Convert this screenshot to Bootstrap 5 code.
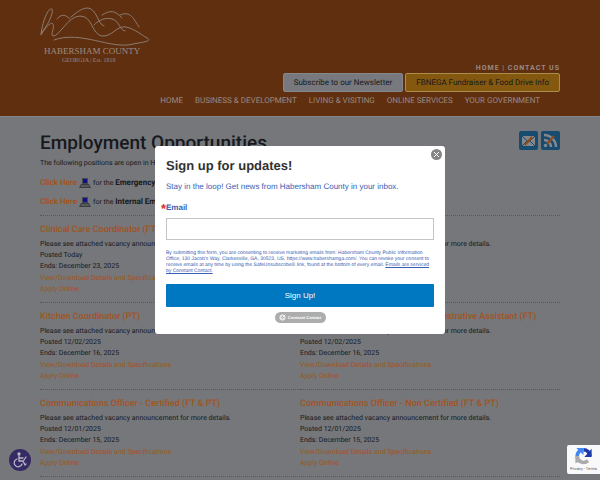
<!DOCTYPE html>
<html lang="en">
<head>
<meta charset="utf-8">
<meta name="viewport" content="width=device-width, initial-scale=1">
<title>Employment Opportunities - Habersham County</title>
<link href="https://cdn.jsdelivr.net/npm/bootstrap@5.3.0/dist/css/bootstrap.min.css" rel="stylesheet">
<style>
body{font-family:Roboto,"Liberation Sans",sans-serif;font-size:7px;line-height:11px;color:#17191d;background:#75777b;text-rendering:geometricPrecision}
a{color:#a35420;text-decoration:none}
.site-gutter{padding-left:40px;padding-right:40px}
.site-header{background:#5f2f10;border-bottom:1px solid #85868a;padding-top:7px;padding-bottom:10px}
.logo{width:112px;height:58px}
.header-links{padding-top:57px}
.top-links{font-size:7px;line-height:9px;font-weight:700;letter-spacing:1px;color:#9a8a80}
.top-links a,.main-nav a{color:#9a8a80}
.cta-row{gap:2px}
.cta{font-size:8px;line-height:11px;padding:3px 10px;border-radius:2px;color:#17191d;background:#77797e;border:1px solid #858789}
.cta-gold{background:#84580f;border:1px solid #a98d4a}
.main-nav{font-size:8px;line-height:10px;gap:12px;padding-right:20px;margin-top:4px}
h1{font-size:19px;line-height:24px;font-weight:500;margin:0}
.page-head{padding-top:14px}
.share-row{gap:3px}
.lead-in{margin:3px 0 8px}
.apply-line{gap:2px;margin:0 0 7px}
.apply-line a,.apply-line b{font-weight:700;font-size:8px}
.pc{width:12px;height:11px}
.share{width:19px;height:19px}
.jobs{display:grid;grid-template-columns:1fr 1fr;border-bottom:1px dotted #55575b}
.job{border-top:1px dotted #55575b;padding:9px 0 7px}
.job h2{font-size:9px;line-height:11px;font-weight:500;margin:0 0 3px;white-space:nowrap}
.job-links{margin-top:1px}
.signup{width:290px;background:#fff;border-radius:3px;padding:11px;font-family:"Liberation Sans",sans-serif;font-size:8px;color:#3860b2}
.signup h2{font-size:13px;line-height:18px;font-weight:700;color:#313131;margin:0 0 7px}
.signup .intro{line-height:10px;margin:0 0 11px}
.signup label{font-weight:700;line-height:10px;margin-bottom:5px}
.signup label::before{content:"*";position:absolute;left:-5px;color:#e0302a;font-size:13px;line-height:11px}
.signup input{height:22px;border:1px solid #c4c4c4;border-radius:0;padding:2px 6px;font-size:8px}
.terms{font-size:5px;line-height:6px;margin:10px 0}
.terms a{color:#3860b2;text-decoration:underline}
.send{background:#0078c1;color:#fff;font-size:8px;line-height:11px;padding:6px;border:0;border-radius:1px}
.send:hover{background:#0069a9;color:#fff}
.cc{background:#adadad;color:#fff;font-size:4px;line-height:11px;border-radius:6px;width:51px;margin-top:5px;gap:2px}
.cc svg{width:7px;height:7px}
.shut{top:3px;right:3px;width:11px;height:11px;border:0;padding:0;background:none;line-height:0}
.shut svg{display:block;width:11px;height:11px}
.access{left:9px;bottom:9px;width:22px;height:22px;border:0;border-radius:50%;background:#352a63;padding:3px}
.captcha{right:0;bottom:6px;width:33px;height:29px;background:#f9f9f9;font-size:4px;line-height:5px;color:#555;border-radius:2px 0 0 2px;padding-top:2px}
.captcha svg{width:19px;height:18px;margin:0 auto 1px}
.captcha,.access{z-index:10}
</style>
<script src="https://cdn.jsdelivr.net/npm/bootstrap@5.3.0/dist/js/bootstrap.bundle.min.js"></script>
</head>
<body>
<header class="site-header site-gutter d-flex justify-content-between">
  <a href="#" aria-label="Habersham County, Georgia" class="flex-shrink-0 position-absolute">
    <svg class="logo d-block" viewBox="0 0 112 58" fill="none" stroke="#8d7b70" stroke-width="1" stroke-linecap="round">
      <path d="M1 26C7 20 14 6 12 2C8 0 2 16 1 28C5 21 11 14 13 17C15 20 10 28 13 29C19 30 28 9 40 9C53 9 51 27 62 29C72 30 77 18 86 20C95 22 103 29 107 31"/>
      <path d="M17 12C21 7 25 7 30 12M31 10C37 5 42 1 48 1C57 2 58 18 64 19M54 18C58 13 67 10 72 12C80 14 79 23 85 24M62 8C70 3 75 3 82 11M80 8C91 3 94 13 99 20M14 33C41 23 71 43 93 37C104 35 113 34 107 31"/>
      <text x="4" y="47" font-family="Liberation Serif,serif" font-size="9" fill="#998a80" stroke="none">HABERSHAM COUNTY</text>
      <text x="22" y="55" font-family="Liberation Serif,serif" font-size="6" fill="#998a80" stroke="none">GEORGIA | Est. 1818</text>
    </svg>
  </a>
  <div class="header-links d-flex flex-column align-items-end ms-auto">
    <div class="top-links"><a href="#">HOME</a> | <a href="#">CONTACT US</a></div>
    <div class="cta-row d-flex text-nowrap">
      <a class="cta" href="#">Subscribe to our Newsletter</a>
      <a class="cta cta-gold" href="#">FBNEGA Fundraiser &amp; Food Drive Info</a>
    </div>
    <nav class="main-nav d-flex text-nowrap">
      <a href="#">HOME</a><a href="#">BUSINESS &amp; DEVELOPMENT</a><a href="#">LIVING &amp; VISITING</a><a href="#">ONLINE SERVICES</a><a href="#">YOUR GOVERNMENT</a>
    </nav>
  </div>
</header>
<svg class="d-none"><symbol id="pc" viewBox="0 0 12 11"><path d="M3 1h6v6H3z" fill="#47494d"/><path d="M4 2h4v4H4z" fill="#10108a"/><path d="M2 7h8l2 4H0z" fill="#3b3d41"/><path d="M2 9h8" stroke="#777"/></symbol></svg>
<main class="site-gutter">
  <div class="page-head d-flex justify-content-between">
    <h1>Employment Opportunities</h1>
    <div class="share-row d-flex">
      <a href="#" aria-label="Email this page"><svg class="share" viewBox="0 0 19 19"><rect width="19" height="19" rx="2" fill="#184b70"/><path d="M3 5h13v10H3z" fill="#83888d"/><path d="M3 5l6.500 6L16 5M3 15l5-5M16 15l-5-5" fill="none" stroke="#24445e"/><path d="M6 14l7-8" stroke="#8b4b1b" stroke-width="2"/></svg></a>
      <a href="#" aria-label="Subscribe to feed"><svg class="share" viewBox="0 0 19 19"><rect width="19" height="19" rx="2" fill="#184b70"/><path d="M3 9a7 7 0 0 1 7 7M3 4a12 12 0 0 1 12 12" fill="none" stroke="#83888d" stroke-width="2.500"/><circle cx="4.500" cy="14.500" r="1.700" fill="#83888d"/><path d="M6 13l7-8" stroke="#8b4b1b" stroke-width="2"/></svg></a>
    </div>
  </div>
  <p class="lead-in">The following positions are open in Habersham County.</p>
  <p class="apply-line d-flex"><a href="#">Click Here</a><svg class="pc"><use href="#pc"/></svg><span>for the <b>Emergency Services</b></span></p>
  <p class="apply-line d-flex"><a href="#">Click Here</a><svg class="pc"><use href="#pc"/></svg><span>for the <b>Internal Employment</b></span></p>
  <div class="jobs">
    <section class="job"><h2><a href="#">Clinical Care Coordinator (FT)</a></h2><div>Please see attached vacancy announcement for more details.<br>Posted Today<br>Ends: December 23, 2025</div><div class="job-links"><a href="#">View/Download Details and Specifications</a><br><a href="#">Apply Online</a></div></section>
    <section class="job"><h2><a href="#">Maintenance Worker (FT)</a></h2><div>Please see attached vacancy announcement for more details.<br>Posted Today<br>Ends: December 23, 2025</div><div class="job-links"><a href="#">View/Download Details and Specifications</a><br><a href="#">Apply Online</a></div></section>
    <section class="job"><h2><a href="#">Kitchen Coordinator (PT)</a></h2><div>Please see attached vacancy announcement for more details.<br>Posted 12/02/2025<br>Ends: December 16, 2025</div><div class="job-links"><a href="#">View/Download Details and Specifications</a><br><a href="#">Apply Online</a></div></section>
    <section class="job"><h2><a href="#">Operations and Development Administrative Assistant (FT)</a></h2><div>Please see attached vacancy announcement for more details.<br>Posted 12/02/2025<br>Ends: December 16, 2025</div><div class="job-links"><a href="#">View/Download Details and Specifications</a><br><a href="#">Apply Online</a></div></section>
    <section class="job"><h2><a href="#">Communications Officer - Certified (FT &amp; PT)</a></h2><div>Please see attached vacancy announcement for more details.<br>Posted 12/01/2025<br>Ends: December 15, 2025</div><div class="job-links"><a href="#">View/Download Details and Specifications</a><br><a href="#">Apply Online</a></div></section>
    <section class="job"><h2><a href="#">Communications Officer - Non Certified (FT &amp; PT)</a></h2><div>Please see attached vacancy announcement for more details.<br>Posted 12/01/2025<br>Ends: December 15, 2025</div><div class="job-links"><a href="#">View/Download Details and Specifications</a><br><a href="#">Apply Online</a></div></section>
  </div>
</main>
<button type="button" class="access position-fixed d-flex" aria-label="Accessibility options"><svg viewBox="0 0 16 16" fill="none" stroke="#b9b9c4" stroke-width="1.300" stroke-linecap="round"><circle cx="7" cy="2" r="1" fill="#b9b9c4"/><path d="M7 4v5h4l2 4 1-1M7 6h4M5 7a4 4 0 1 0 5 5M12 8l2-3"/></svg></button>
<div class="captcha position-fixed text-center">
  <svg class="d-block" viewBox="0 0 20 20" fill="none" stroke-width="4"><path d="M10 3a7 7 0 0 1 7 7" stroke="#1c3aa9"/><path d="M3 10a7 7 0 0 1 7-7" stroke="#4285f4"/><path d="M3 10a7 7 0 0 0 12 5" stroke="#ababab"/><path d="M19 2v9h-8z" fill="#1c3aa9"/><path d="M2 1h8v8z" fill="#4285f4"/><path d="M1 18V9l7 6z" fill="#ababab"/></svg>
  Privacy - Terms
</div>
<div class="position-fixed top-0 start-0 w-100 h-100 d-flex align-items-center justify-content-center" role="dialog" aria-label="Sign up for updates">
  <form class="signup position-relative">
    <button type="button" class="shut position-absolute" aria-label="Close"><svg viewBox="0 0 11 11"><circle cx="5.500" cy="5.500" r="5.500" fill="#858585"/><path d="M3 3l5 5M8 3l-5 5" stroke="#fff"/></svg></button>
    <h2>Sign up for updates!</h2>
    <p class="intro">Stay in the loop! Get news from Habersham County in your inbox.</p>
    <label class="d-block position-relative" for="email">Email</label>
    <input class="form-control" type="email" id="email" required>
    <p class="terms">By submitting this form, you are consenting to receive marketing emails from: Habersham County Public Information Office, 130 Jacob's Way, Clarkesville, GA, 30523, US, https://www.habershamga.com/. You can revoke your consent to receive emails at any time by using the SafeUnsubscribe® link, found at the bottom of every email. <a href="#">Emails are serviced by Constant Contact.</a></p>
    <button type="submit" class="btn send w-100 d-block">Sign Up!</button>
    <div class="cc d-flex align-items-center justify-content-center mx-auto"><svg viewBox="0 0 8 8" fill="none" stroke="#fff"><circle cx="4" cy="4" r="3"/><path d="M4 2a2 2 0 1 0 2 2M4 4l3-3"/></svg><b>Constant Contact</b></div>
  </form>
</div>
</body>
</html>
